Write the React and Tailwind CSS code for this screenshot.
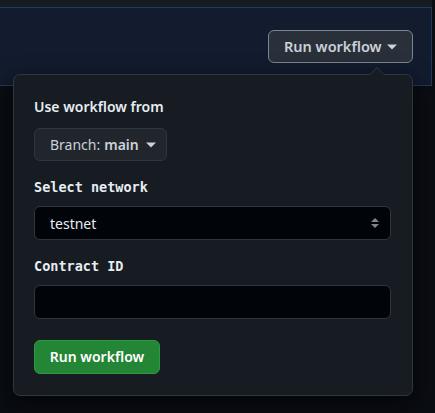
import React from "react";

const sans = { fontFamily: '"Segoe UI", "Noto Sans", "Open Sans", sans-serif' };

function Caret({ className = "" }) {
  return (
    <svg width="10" height="6" viewBox="0 0 10 6" className={className}>
      <path d="M0 0.5 L10 0.5 L5 5.5 Z" fill="currentColor" />
    </svg>
  );
}

export default function App() {
  return (
    <div
      className="relative w-[435px] h-[413px] overflow-hidden bg-[#0a0d12]"
      style={sans}
    >
      <div className="h-[7px] bg-[#161b22] w-[432px]" />
      <div className="w-[432px] h-[79px] bg-[#121c2e] border-t border-r border-b border-[#233a5c] flex justify-end items-start pt-[22px] pr-[18px]">
        <button className="h-[33px] w-[145px] rounded-[6px] border border-[#7d8590] bg-[#2a3039] flex items-center justify-between pl-[15px] pr-[15px] text-[14.5px] font-semibold text-[#c9d1d9] leading-none">
          <span>Run workflow</span>
          <Caret className="text-[#c9d1d9]" />
        </button>
      </div>

      {/* dropdown panel */}
      <div className="absolute left-[13px] top-[74px] w-[400px] h-[322px] rounded-[7px] border border-[#30363d] bg-[#171b22] shadow-[0_8px_24px_rgba(1,4,9,0.8)] px-[20px] pt-[22px]">
        <div className="absolute -top-[8px] right-[27px] w-0 h-0 border-l-[8px] border-r-[8px] border-b-[8px] border-l-transparent border-r-transparent border-b-[#30363d]" />
        <div className="absolute -top-[7px] right-[28px] w-0 h-0 border-l-[7px] border-r-[7px] border-b-[7px] border-l-transparent border-r-transparent border-b-[#171b22]" />

        <div className="text-[14px] font-semibold text-[#e6edf3] leading-[20px]">
          Use workflow from
        </div>
        <button className="mt-[11px] h-[33px] w-[133px] rounded-[6px] border border-[#30363d] bg-[#21262d] flex items-center pl-[15px] text-[14px] text-[#c9d1d9] leading-none">
          <span>Branch: </span>
          <span className="font-semibold ml-[4px]">main</span>
          <Caret className="ml-[7px] text-[#c9d1d9]" />
        </button>

        <div
          className="mt-[16px] text-[13.5px] font-bold text-[#e6edf3] leading-[20px]"
          style={{ fontFamily: '"DejaVu Sans Mono", "Liberation Mono", monospace' }}
        >
          Select network
        </div>
        <div className="mt-[9px] h-[34px] w-[357px] rounded-[6px] border border-[#30363d] bg-[#010409] flex items-center justify-between pl-[15px] pr-[10px] text-[14px] text-[#e6edf3]">
          <span>testnet</span>
          <svg width="10" height="14" viewBox="0 0 10 14">
            <path d="M1 6 L5 2 L9 6 Z" fill="#7d8590" />
            <path d="M1 8 L5 12 L9 8 Z" fill="#7d8590" />
          </svg>
        </div>

        <div
          className="mt-[16px] text-[13.5px] font-bold text-[#e6edf3] leading-[20px]"
          style={{ fontFamily: '"DejaVu Sans Mono", "Liberation Mono", monospace' }}
        >
          Contract ID
        </div>
        <div className="mt-[9px] h-[34px] w-[357px] rounded-[6px] border border-[#30363d] bg-[#010409]" />

        <button className="mt-[21px] h-[34px] w-[126px] rounded-[6px] border border-[#2e9a40] bg-[#238636] flex items-center justify-center text-[14px] font-semibold text-white leading-none">
          Run workflow
        </button>
      </div>
    </div>
  );
}
